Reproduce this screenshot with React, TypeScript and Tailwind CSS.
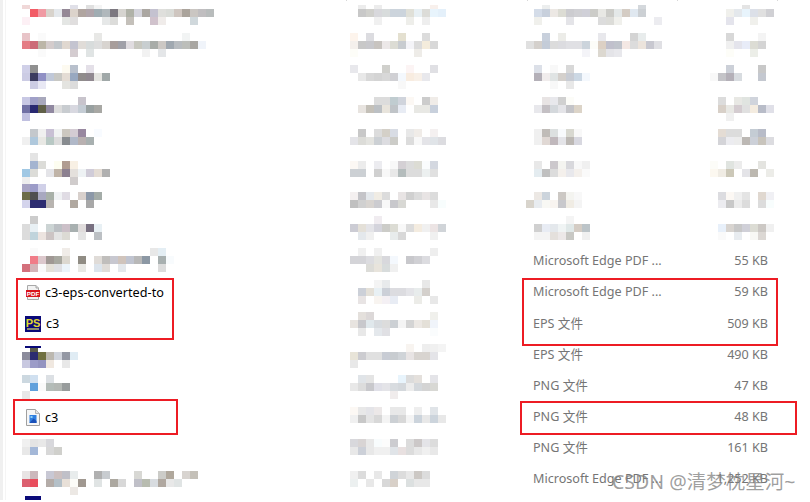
import React from 'react'

const ROW_H = 31.1
const ROW_OFFSET = -2.55

type Blur = { y: number; lines: string[] }
type Row = {
  name: Blur | { icon: 'pdf' | 'ps' | 'png'; label: string }
  date: Blur
  type: Blur | string
  size: Blur | string
}

const ROWS: Row[] = [
  {
    name: { y: 5, lines: [
      'f0d8d8 . . . . . e0e0e8 . e0e0e0 f4f4f4',
      '. f25c66 f09aa3 d8d3cc e4e8ec 948896 dcd3cb b0a5a0 b0a5ab a0adb3 b0b8bc 7c7880 d6d4d0 b0b2a8 d4d4dc aba7a2 c4c2d0 dfdfdc dadcd8 cfc6c0 aba49c cac6c2 c0bec0 b8bcbc',
      'fdf0f5 . . . . e4e6e4 e0dede . . . e6e8e8 dcdcda . c4c0ba . . d0c2cc f0ecea . . . d0d8dc',
    ] },
    date: { y: 5, lines: [
      '. ececec . ececec . . . . . . f8f0ec',
      '. c8c8c8 d0d0cc d8d8dc d8dcdc ccd4dc ccd4dc e0e0d8 e8f0f4 dcdcd8 e8f4fc e4f0fa',
      '. . . f0f0f0 . . . eeeeea . eeeeee',
    ] },
    type: { y: 5, lines: [
      '. . eceeee . . . . . . . . . . . d4d8dc',
      '. d4dce8 c8d0dc ece8e4 dcdcd4 ccccd0 d0d0d4 d0d0d8 ccccc8 e8e8e4 ccccc8 e4e8e8 d4ccc4 e0e8f0 ccd0d4',
      '. f0f0ec . . . e4e4e8 . . . dcdcdc dcdcd8 f0f0ec . . . . ececf0',
    ] },
    size: { y: 5, lines: [
      '. . . . e4e4e4',
      '. . f0f0ec e4e8ec e8f4fc dce0e8 e0e0e0 d0d0d4',
      '. . e4e4ec . . f0f0ec',
    ] },
  },
  {
    name: { y: 33, lines: [
      'e8c4c8 . fafafa . . . . . . e8e8e6 . . . . . . . . . . f2f4f4',
      'e47c84 cc6c78 bcb6a8 d4cccc c4c8cc e0d8d0 c4c4d0 e0dcd8 d8dcdc dedede d8d4d0 a89e9c a0a0a8 e0dce0 c8c8c0 c8ced0 a8aca8 ccc8c4 a0a8b0 b8bcc0 bcbeba a8a6a2 f0f4fa',
      '. . fafafa . . . d4ccd0 . e0e4e4 . . . . . . f2f2f2 . e4e6e8',
    ] },
    date: { y: 33, lines: [
      'fdf4ec . dcdce0 . . . e4e0d0 . . dcdcdc',
      'f4f0ec c8c8c8 c8c8cc c8c4c0 ece8e8 dcdcd4 c8ccd0 f4f4f8 dcdcdc f4ecdc d8d8d8',
      'fdfdf8 . . . . . . . eeece8',
    ] },
    type: { y: 33, lines: [
      '. . c8d0dc . ecece8 . . . . e8e8ec . . . d4d4d4 e8ecec',
      'e0e0e0 d4d0cc c4ccd8 dcdcdc dcdce0 e0e0e4 e0e0e4 ccd4dc fcfcf8 dcd0c4 c0c0cc c0c4cc f4e8e4 dcdcdc ece4dc c8c8d0 e0e0e4',
      '. . . . . . . f4f4f8 . dcd8d0 e4e4e8 e8e8ec',
    ] },
    size: { y: 33, lines: [
      '. . d8d8d8 . . . f4f4f4',
      '. . f0f0f0 e4e4ec e8ecf8 dcdcd4 d4d4d4',
      '. . fdfdf8 . . eceee8',
    ] },
  },
  {
    name: { y: 65, lines: [
      'd0d0e8 909090 . . . fdfaf0 b8c0cc . e4e0e8',
      'cccce4 3c3c60 9090c4 c0c8d8 c8c8c4 e4dcd4 98a8c0 908c8c 908890 e4e4e0 a0a8a8',
      '. ccccE4 e8e8f4 . . e4e4e0 dcdcdc',
    ] },
    date: { y: 65, lines: [
      'e8e8ec . . . d0d0cc . . fcf4f4 . . e0e0e4',
      '. e8e8e8 d8d8d8 d4d4d4 d8d8d8 d0d0d4 f4f8fd f8ece0 f8f0e8 e8e8ec',
      '. . . . . . f8f8f8',
    ] },
    type: { y: 65, lines: [
      '. dce0e8 . f8f8f8 . d8d8d8',
      '. b4b0b8 f0ecec e0e4e4 d4d0cc c8ccd4 ccd8e4 f4f8fd',
      '. . . f8f8f8 . e8e8e8',
    ] },
    size: { y: 65, lines: [
      '. . ccd0d8 . . . c8c8c8',
      'f8f8f8 c4c4c8 b4b0b8 d8dce0 . . c4c8d0',
    ] },
  },
  {
    name: { y: 97, lines: [
      'c8c8e4 a0a0c8 a8a8bc . . . . c8c4cc',
      '7070a4 282870 606048 9088a0 dcdcdc c8ccd0 d8d8e0 c4ccd4 98a0a0 a8a8a4',
      'c0c0e0',
    ] },
    date: { y: 97, lines: [
      '. . . dcdcdc dcdcdc c0ccd0 d0d4dc fcf8f4 . cccccc f0ece8',
      '. e8e4e0 c4c0b8 bcc0c4 e8e4dc c0c4c8 e8ecf4 . e8e8e4 e8e8e4 c8d0dc',
    ] },
    type: { y: 97, lines: [
      '. . e8e4e4 e8e8ec d0d0d0 fcfcf8',
      '. e8e8ec c4c0c4 d4d8dc e4e4e8 c4c4c8 dcd4c8',
    ] },
    size: { y: 97, lines: [
      '. dcdcdc . e8e8e4 e0e4e0 d0d4dc',
      '. d8d0c8 e8e8e4 d4ccd0 e0e0e0 f4ece0 b8bcc8 e0e0e8',
      '. . f0f0f0',
    ] },
  },
  {
    name: { y: 129, lines: [
      '. c4c8cc f0f0f0 c8c0d4 f0f2f2 ccc8c0 d4ccd4 9888a0 . f8fbff',
      'f0f0f0 afc8dc e8e8e4 b8c8c4 dcdcdc 888c90 b0b8c8 b8b0b0 a8b0b0',
    ] },
    date: { y: 129, lines: [
      '. c8c8c8 . dcdcdc d4d0c8 d8dce4 . e8e8e8 f0ece8 . f4f0f0',
      'e4e4e8 dcdcd8 e4e4e0 ccd0d4 dcdce0 ccccc8 . dcdcdc f8f8f8 e4e4e8 e0e4e8 dcdce0',
    ] },
    type: { y: 129, lines: [
      '. f0f0f0 c0bcb8 dce0e0 f8fafc d8d8d0 f8f8f8',
      '. f0f0f0 e0d8d4 c0b8bc e4e4e8 bcb8b4 d8d8e0',
    ] },
    size: { y: 129, lines: [
      '. e4dcd4 dcdcdc dcdcdc . c4ccd4 b8bcc8',
      '. d4d4d8 ececf0 ececec bcb8b4 ccd0d8 c8c4bc dcdce0',
    ] },
  },
  {
    name: { y: 153, lines: [
      '. e4e4e4',
      '. a4b4d0 dcdcd8 . fdfdf0 b09c90 f8f0e4',
      'a0c8e4 dcdcd8 . e4e4e8 c0b4a8 8c8090 e4e0dc eef2f4 d0ccd8 e4dcd4 b0b0b0',
      'eeeeee . . . . . d0cccc',
    ] },
    date: { y: 161, lines: [
      'fcf8f4 ececec . ececf0 . f8f8f8 d4d0d4 dcdcdc dcdcd4 fafcfd d4d8e0',
      'ccd0d4 ccd0d4 . d0d0d0 f8f8f8 e8e8e8 b4bcbc dcdcdc dcdcdc ecf0f0 e0e0e0',
    ] },
    type: { y: 161, lines: [
      '. e8e8e8 . ccc8cc f4f4f0 d8d8dc f8f8f8 f0f0f0',
      '. e4ecf0 c0c0c0 dcdcdc f4f0ec e8e8ec f4f0ec fafafa',
    ] },
    size: { y: 161, lines: [
      'fcfcf8 . e0e4e0 ececec . . e4e4e0',
      'fcf8f0 f0ece4 ccc8b8 . e4e4e8 bcb8b0 . ecece8',
    ] },
  },
  {
    name: { y: 184, lines: [
      'a8a4c4 9c9cc8 d0d0e8',
      '6c6c48 505050 a8a8c0 a8b0a8 f0f2f4 e0dce4 . d8d0cc 8c98a8 a4aca8',
      'd4d4ec 2c2c70 2c2c70 b8b4b0 . . b0a8a0 . a8a8a8',
    ] },
    date: { y: 192, lines: [
      'f4f0f0 c4c4c8 e4e8ec f0ece4 dcdcdc . e8e4e4 d0d0d0 dcdcdc e8e4e4 dcdcdc',
      'c0c0c0 d0d0d0 d8d4d0 ccccd0 f8f8f8 c8c8cc d8d8d4 . . . e8e8e8 f8fdfd',
    ] },
    type: { y: 192, lines: [
      '. ece8e4 ccd4dc . ccc8c4 f4f4f0 f8f8f8',
      'd8d4cc e8ecf0 f8f8f4 f8f4f0 c8c8cc f0ece4 f4f4f4',
    ] },
    size: { y: 192, lines: [
      '. dcdce0 fcf8f4 f0f0f0 e4e4e4 . e0d8d0 f0f0f4',
      '. ececf0 c8c8c8 ececec dcdcdc . dcdcdc f8fdfd',
    ] },
  },
  {
    name: { y: 216, lines: [
      '. cccccc',
      'dcdcdc e8f0f4 . ccd4d4 bcc0c4 ccc0c8 a8b0b0 e0dcdc 787080 e8f0f4',
      'dcdcdc c0d4dc ece4e0 ccc4c4 e4e4e4 dcdad4 . e4e4e4 . bcc0c4',
    ] },
    date: { y: 216, lines: [
      '. . . f0ecf0',
      'ccccd4 e4e0d8 e4e4e8 d4d4dc ccccc8 dcdcd4 f8f8f8 dcdcdc f4ece0 f0f0f0 ece4e4 d0d4d8',
      '. e4e8ec f0f0f0 . . e8ecec d8d8d8 . . . f0f0f0',
    ] },
    type: { y: 216, lines: [
      '. . . . . f4f4f4',
      '. d0d0d0 e8ecf4 e4e8ec f0f4f4 e0e8e8 d4ccc4 bcc4c8',
      '. f4f4f4 f4f4f4 e4e0dc ece8e8 c8c8c4 . f0f0f0',
    ] },
    size: { y: 224, lines: [
      '. e8f0fa d8d4d0 c8c8c8 d0d0d8 dcdcd4 ccc8c4 f0f0f0',
      '. fafafa . e8ecf0 . f8f8f4 dcd8d4',
    ] },
  },
  {
    name: { y: 248, lines: [
      '. fafafa . . . f0ece8 . . . . . . . . . . e8e8e8 e4eef4',
      '. f07c88 dcc8cc a09894 a8a8a0 dcd8d0 . 908c84 . e0dcd8 c0bebc c8c8d0 d0c4bc c0c4d0 b8b8b8 8c98a4 . a8b0b0 f8fbfd',
      'd4707c d4b4b8 fafafa e4e0d8 e0e0e4 ecf4fa . e8e8e4 . dce4ec e0dcd8 . e4e8ec . . . . dcdcdc',
    ] },
    date: { y: 248, lines: [
      '. f0f0f0 . f0f0f0 . . . . . . eeeeee',
      'd4d4d8 d4d4d8 dcdce0 e4e4e0 d8d8dc f4f8fd . c8c8cc d0d0d4 dcdce0',
      '. . dcdcd8 e8e4dc d8dcdc f0f0f0',
    ] },
    type: 'Microsoft Edge PDF ...',
    size: '55 KB',
  },
  {
    name: { icon: 'pdf', label: 'c3-eps-converted-to' },
    date: { y: 280, lines: [
      '. . . f4f4f4 e8eaec . . . . e8e8e8',
      '. ccd0d8 e4e0d8 e8f0f4 ccd0d8 dcdce0 dcdce0 e4e4e8 e8ecec d4d0cc',
      '. e8e4e4 . f8f4f0 f4f0f4 e8ecf4 . . ecece8 . e8e8e8',
    ] },
    type: 'Microsoft Edge PDF ...',
    size: '59 KB',
  },
  {
    name: { icon: 'ps', label: 'c3' },
    date: { y: 312, lines: [
      '. e4e0dc dcd8d8 . . . . . . . f0f0ec',
      'e8e4e0 c8c8cc e0e8ec d8dce0 dcdcdc ccd0d4 f4f4f4 d4d4d4 ece8e4 e4e0d8 f0f4fa',
      '. e8e8e8 . e4e8ec e0e0e4 . . . . . fafcfd',
    ] },
    type: 'EPS 文件',
    size: '509 KB',
  },
  {
    name: { y: 352, lines: [
      '8c8c9c 2c2c70 707040 bcb8b0 d0d4dc 9498a4 e0ecf4',
      'c8c8e0 9c9cc8 9494c0 f0e8e0 . e8e8e8',
    ] },
    date: { y: 344, lines: [
      '. . . . . . . f8f4f0 . eeeeee f0f0f0 f4f4f4',
      'e8e4d8 ccccd0 e0e0e0 e0e0e0 c8ccd4 c8ccd0 d0d4d8 e8e4e4 d8d4d0 d8d4d0 e4e4e8',
      'e8e8e8',
    ] },
    type: 'EPS 文件',
    size: '490 KB',
  },
  {
    name: { y: 375, lines: [
      'ccd8e0 d0e0f0 . dce0e4',
      '. 60a0dc fafafa b4bcb8 b4b8b4 989c9c',
      'e8e8e8',
    ] },
    date: { y: 375, lines: [
      '. e0e4e8 e4e4e4 . . . e8f4fc dcdcdc e4e0dc . e4e4e8',
      'e8e8e8 dcdcdc c8c8cc e0e0e8 e4e4e8 d8dce0 d4d8dc ececec d4d8dc d4d4d4 d8d8d4',
      '. . . . . f0ecec',
    ] },
    type: 'PNG 文件',
    size: '47 KB',
  },
  {
    name: { icon: 'png', label: 'c3' },
    date: { y: 407, lines: [
      'fcf8f4 e8e8e8 e4e4e8 ece8e8 . e8e8e8 e8e8e8 . eeeeee . e0e4e8',
      'f0f0f0 c8c8c8 e4e4e4 d8d8d8 f4f4f4 ccd0d4 d8d8d8 f4f4f4 ccd4dc e8e8e8 ccd4dc e8e8e8',
    ] },
    type: 'PNG 文件',
    size: '48 KB',
  },
  {
    name: { y: 439, lines: [
      'f0f0f0 e4e4e4 e8e8e8 d8d8dc',
      'e8e8e8 a4b8d8 . d8d8d8 d0d0cc',
    ] },
    date: { y: 439, lines: [
      'd8d8dc d8d4d4 e8e8e8 f8fcfd fcfcfc ccccd0 . dcdcdc ccc8c8 e4e4e8 dcdcdc',
      'e8e8e8 ccd0d8 e8e8e8 f0f0f0 f0f0f0 e0e4e8 e8e0e0 dcdcdc e8e8e8 f0f0f0 e8e8e8',
    ] },
    type: 'PNG 文件',
    size: '161 KB',
  },
  {
    name: { y: 471, lines: [
      'e8e4e4 ccb8bc . c8c8d4 ccc0c0 c0c0c8 e8ecec . . b0b0b0 c8ccd0 . . . d8d8d4 . . ccccc8 b0a89c . d8d4d0 c4c0b8',
      'dc6070 e84c5c . b4aca8 b4c0c8 e8e0d8 fcfcf8 a09890 . e0e4e4 . aca8a0 d8d8d8 . c0c0c8 b8bcb0 d8dce0 b0a8a0 e8e8e8 e0e4e4',
      '. fafafa . . . . ece8e4',
    ] },
    date: { y: 471, lines: [
      'f0f0f0 dcdcdc . e8e8e8 . d0d4d8 dcdcdc e8e8e8 ccc8c4 dcdcdc',
      'ecf0f0 . e8e8e8 . d8d8d8 d8d0c8 . dce0e0 e8e8e8 e8e8e8',
    ] },
    type: 'Microsoft Edge PDF ...',
    size: '1,252 KB',
  },
]

// celdas de 8px, igual que el pixelado de la captura
const Mosaic: React.FC<{ blur: Blur; rowIndex: number }> = ({ blur, rowIndex }) => {
  const rowTop = rowIndex * ROW_H + ROW_OFFSET
  const short = blur.y === 5
  return (
    <div className="flex flex-col" style={{ marginTop: blur.y - rowTop }}>
      {blur.lines.map((line, l) => (
        <div key={l} className={short && l === 0 ? 'flex h-1' : 'flex h-2'}>
          {line.split(' ').map((c, i) => (
            <div key={i} className="w-2 shrink-0" style={{ background: c === '.' ? 'transparent' : `#${c}` }} />
          ))}
        </div>
      ))}
    </div>
  )
}

const PdfIcon = () => (
  <svg width="14" height="15" viewBox="0 0 14 15" className="shrink-0">
    <path d="M1.5 .5H10L12.5 3V14.5H1.5Z" fill="#f2f2f2" stroke="#a8a8a8" />
    <path d="M10 .5V3H12.5" fill="#dcdcdc" stroke="#a8a8a8" />
    <rect x="0" y="5" width="14" height="7" fill="#d8141c" />
    <text x="7" y="11" textAnchor="middle" fontSize="6.2" fontWeight="700" fill="#fff" fontFamily="Liberation Sans, sans-serif">PDF</text>
  </svg>
)

const PsIcon = () => (
  <svg width="16" height="16" viewBox="0 0 16 16" className="shrink-0 -ml-px">
    <rect width="16" height="16" fill="#0a0a78" />
    <text x="8" y="10.5" textAnchor="middle" fontSize="11" fontWeight="700" fill="#e0d830" fontFamily="Liberation Sans, sans-serif">PS</text>
    <rect x="2" y="12" width="12" height="2" fill="#8c8c70" />
  </svg>
)

const PngIcon = () => (
  <svg width="14" height="17" viewBox="0 0 14 17" className="shrink-0">
    <path d="M.5 .5H9.5L13.5 4.5V16.5H.5Z" fill="#f6f6f6" stroke="#a0a0a0" />
    <path d="M9.5 .5V4.5H13.5" fill="#e4e4e4" stroke="#b4b4b4" />
    <rect x="3.5" y="6" width="7" height="8" fill="#2f7fe0" />
    <path d="M3.5 14L7.5 9.5L10.5 12V14Z" fill="#1a50b8" />
    <rect x="4.5" y="7" width="2" height="2" fill="#8fd0f4" />
  </svg>
)

const ICONS = { pdf: PdfIcon, ps: PsIcon, png: PngIcon }

const Box: React.FC<{ className: string }> = ({ className }) => (
  <div className={`absolute border-2 border-[#ed1c24] ${className}`} />
)

const FileRow: React.FC<{ row: Row; index: number }> = ({ row, index }) => {
  const Icon = 'icon' in row.name ? ICONS[row.name.icon] : null
  return (
    <div className="flex h-[31.1px] shrink-0">
      <div className="w-[344px] shrink-0 pl-4">
        {'icon' in row.name && Icon ? (
          <div className="flex h-full items-center gap-[5px] pl-1 text-[12.7px] text-black">
            <Icon />
            <span>{row.name.label}</span>
          </div>
        ) : (
          <Mosaic blur={row.name as Blur} rowIndex={index} />
        )}
      </div>
      <div className="w-44 shrink-0">
        <Mosaic blur={row.date} rowIndex={index} />
      </div>
      <div className="w-[184px] shrink-0">
        {typeof row.type === 'string' ? (
          <div className="flex h-full items-center pl-[7px] text-[12.6px] text-[#757575]">{row.type}</div>
        ) : (
          <Mosaic blur={row.type} rowIndex={index} />
        )}
      </div>
      <div className="w-[58px] shrink-0">
        {typeof row.size === 'string' ? (
          <div className="flex h-full items-center justify-end whitespace-nowrap text-[12.6px] text-[#757575]">{row.size}</div>
        ) : (
          <Mosaic blur={row.size} rowIndex={index} />
        )}
      </div>
    </div>
  )
}

export default function App() {
  return (
    <div className="relative h-[502px] w-[810px] overflow-hidden bg-white font-['Noto_Sans','Noto_Sans_CJK_SC',sans-serif]">
      <div className="h-full border-l-[3px] border-[#f0f0f0]">
        <div className="ml-0.5 h-full border-l border-[#f5f5f5]">
          <div className="-mt-[2.5px] flex flex-col">
            {ROWS.map((row, i) => (
              <FileRow key={i} row={row} index={i} />
            ))}
            <div className="ml-[19px] mt-[1px] h-1 w-4 bg-[#0a0a78]" />
          </div>
        </div>
      </div>

      {/* marcas de columna arriba */}
      <div className="absolute left-[346px] top-0 h-px w-px bg-[#d8d8d8]" />
      <div className="absolute left-[527px] top-0 h-px w-px bg-[#d8d8d8]" />
      <div className="absolute left-[677px] top-0 h-px w-px bg-[#d8d8d8]" />
      <div className="absolute left-[777px] top-0 h-px w-px bg-[#d8d8d8]" />

      {/* cabecera del icono que asoma en la fila 12 */}
      <div className="absolute left-[25px] top-[346px] h-0.5 w-4 bg-[#0a0a78]" />
      <div className="absolute left-[30px] top-[348px] h-1 w-2 bg-[#5a5a48]" />

      {/* recuadros rojos */}
      <Box className="left-4 top-[278px] h-[62px] w-[158px]" />
      <Box className="left-[522px] top-[278px] h-[68px] w-[256px]" />
      <Box className="left-[13px] top-[399px] h-9 w-[165px]" />
      <Box className="left-[520px] top-[401px] h-[34px] w-[277px]" />

      {/* marca de agua */}
      <div className="absolute left-[612px] top-[468px] whitespace-nowrap text-[19.5px] leading-[28px] text-[#808080]/75">CSDN @清梦枕星河~</div>
    </div>
  )
}
